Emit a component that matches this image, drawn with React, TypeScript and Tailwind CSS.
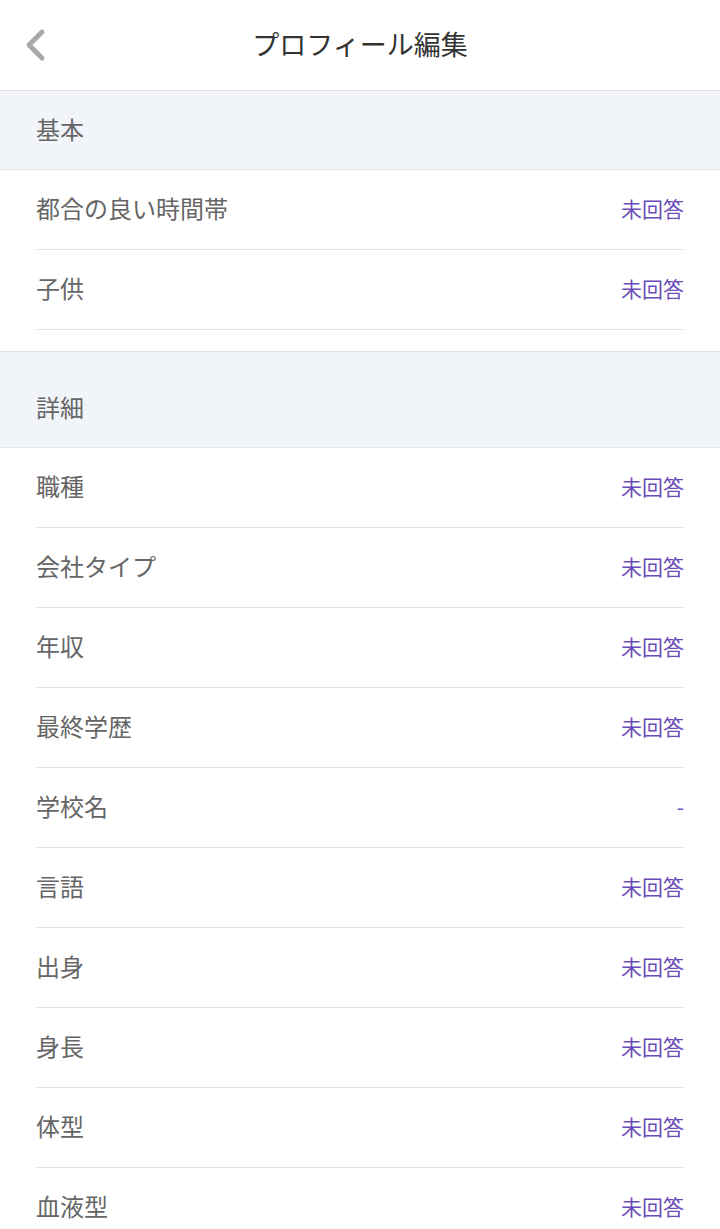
import React from "react";

const font = { fontFamily: '"Noto Sans CJK JP", "Noto Sans", sans-serif' };

function Row({ label, value }: { label: string; value: string }) {
  return (
    <div className="mx-[36px] flex h-[80px] items-center justify-between border-b border-[#e4e4e4] pb-[3px]">
      <span className="text-[24px] leading-none text-[#666666]">{label}</span>
      <span className="text-[21px] leading-none text-[#6a4cb8]">{value}</span>
    </div>
  );
}

export default function App() {
  const basic = [
    ["都合の良い時間帯", "未回答"],
    ["子供", "未回答"],
  ];
  const detail = [
    ["職種", "未回答"],
    ["会社タイプ", "未回答"],
    ["年収", "未回答"],
    ["最終学歴", "未回答"],
    ["学校名", "-"],
    ["言語", "未回答"],
    ["出身", "未回答"],
    ["身長", "未回答"],
    ["体型", "未回答"],
    ["血液型", "未回答"],
  ];
  return (
    <div className="h-[1229px] w-[720px] overflow-hidden bg-white" style={font}>
      <div className="relative flex h-[91px] items-center justify-center border-b border-[#e0e0e0] pb-[3px]">
        <svg
          className="absolute left-[22px] top-[28px]"
          width="26"
          height="34"
          viewBox="0 0 26 34"
          fill="none"
        >
          <path
            d="M20 4 L7 17 L20 30"
            stroke="#a9a9a9"
            strokeWidth="5"
            strokeLinecap="round"
            strokeLinejoin="round"
          />
        </svg>
        <span className="text-[27px] leading-none text-[#333333]">プロフィール編集</span>
      </div>
      <div className="flex h-[79px] items-center border-b border-[#e2e4e8] bg-[#f1f4f8] px-[36px] pb-[3px]">
        <span className="text-[24px] leading-none text-[#666666]">基本</span>
      </div>
      {basic.map(([l, v]) => (
        <Row key={l} label={l} value={v} />
      ))}
      <div className="h-[22px] border-b border-[#e2e4e8]" />
      <div className="flex h-[96px] items-center border-b border-[#e2e4e8] bg-[#f1f4f8] px-[36px] pt-[15px]">
        <span className="text-[24px] leading-none text-[#666666]">詳細</span>
      </div>
      {detail.map(([l, v]) => (
        <Row key={l} label={l} value={v} />
      ))}
    </div>
  );
}
